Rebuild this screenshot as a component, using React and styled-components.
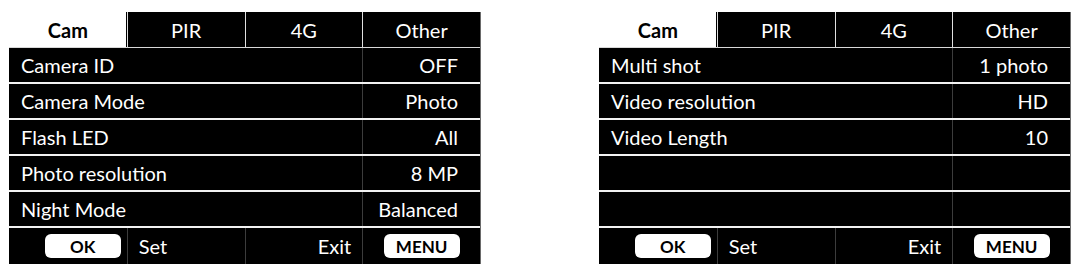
import React from 'react';
import styled, { createGlobalStyle } from 'styled-components';

//Page defaults
const GlobalStyle = createGlobalStyle`
  body {
    margin: 0;
    background: #ffffff;
    font-family: 'Lato', 'Liberation Sans', sans-serif;
  }
`;

//Holds the two menu screens side by side
const Page = styled.div`
  display: flex;
  gap: 118px;
  padding: 12px 0 0 9px;
`;

//One camera menu screen
const Panel = styled.div`
  width: 471px;
  background: #000;
  color: #fff;
  display: flex;
  flex-direction: column;
  border-right: 1px solid #6a6a6a;
`;

//Tabs along the top
const TabBar = styled.div`
  display: grid;
  grid-template-columns: repeat(4, 1fr);
  height: 36px;
  box-sizing: border-box;
  border-bottom: 1px solid #d8d8d8;
`;

const Tab = styled.div`
  display: flex;
  align-items: center;
  justify-content: center;
  font-size: 20px;
  font-weight: ${(p) => (p.$active ? 700 : 400)};
  background: ${(p) => (p.$active ? '#fff' : '#000')};
  color: ${(p) => (p.$active ? '#000' : '#fff')};
  border-left: ${(p) => (p.$first ? 'none' : '1px solid #e0e0e0')};
  box-shadow: ${(p) => (p.$active ? 'inset -1px 0 0 #000' : 'none')};
`;

//One setting line
const Row = styled.div`
  display: grid;
  grid-template-columns: 353px 1fr;
  height: 36px;
  box-sizing: border-box;
  border-bottom: 2px solid #f2f2f2;
  font-size: 20px;
`;

const Label = styled.div`
  display: flex;
  align-items: center;
  padding-left: 12px;
`;

const Value = styled.div`
  display: flex;
  align-items: center;
  justify-content: flex-end;
  padding-right: 22px;
  border-left: 1px solid #3c3c3c;
`;

//Bottom key hints
const Footer = styled.div`
  display: grid;
  grid-template-columns: repeat(4, 1fr);
  height: 36px;
  font-size: 20px;
`;

const FootCell = styled.div`
  display: flex;
  align-items: center;
  justify-content: ${(p) => p.$align || 'center'};
  padding: ${(p) => p.$pad || '0'};
  border-left: ${(p) => (p.$first ? 'none' : '1px solid #3c3c3c')};
`;

const Key = styled.div`
  width: 76px;
  height: 24px;
  border-radius: 6px;
  background: #fff;
  color: #000;
  font-weight: 700;
  font-size: 17px;
  display: flex;
  align-items: center;
  justify-content: center;
`;

const tabs = ['Cam', 'PIR', '4G', 'Other'];

const screens = [
  [
    ['Camera ID', 'OFF'],
    ['Camera Mode', 'Photo'],
    ['Flash LED', 'All'],
    ['Photo resolution', '8 MP'],
    ['Night Mode', 'Balanced'],
  ],
  [
    ['Multi shot', '1 photo'],
    ['Video resolution', 'HD'],
    ['Video Length', '10'],
    ['', ''],
    ['', ''],
  ],
];

const MenuScreen = ({ rows }) => (
  <Panel>
    <TabBar>
      {tabs.map((t, i) => (
        <Tab key={t} $active={i === 0} $first={i === 0}>
          {t}
        </Tab>
      ))}
    </TabBar>
    {rows.map(([label, value], i) => (
      <Row key={i}>
        <Label>{label}</Label>
        <Value>{value}</Value>
      </Row>
    ))}
    <Footer>
      <FootCell $first $align="flex-end" $pad="0 6px 0 0">
        <Key>OK</Key>
      </FootCell>
      <FootCell $align="flex-start" $pad="0 0 0 11px">Set</FootCell>
      <FootCell $align="flex-end" $pad="0 11px 0 0">Exit</FootCell>
      <FootCell>
        <Key>MENU</Key>
      </FootCell>
    </Footer>
  </Panel>
);

const App = () => (
  <>
    <GlobalStyle />
    <Page>
      {screens.map((rows, i) => (
        <MenuScreen key={i} rows={rows} />
      ))}
    </Page>
  </>
);

export default App;
